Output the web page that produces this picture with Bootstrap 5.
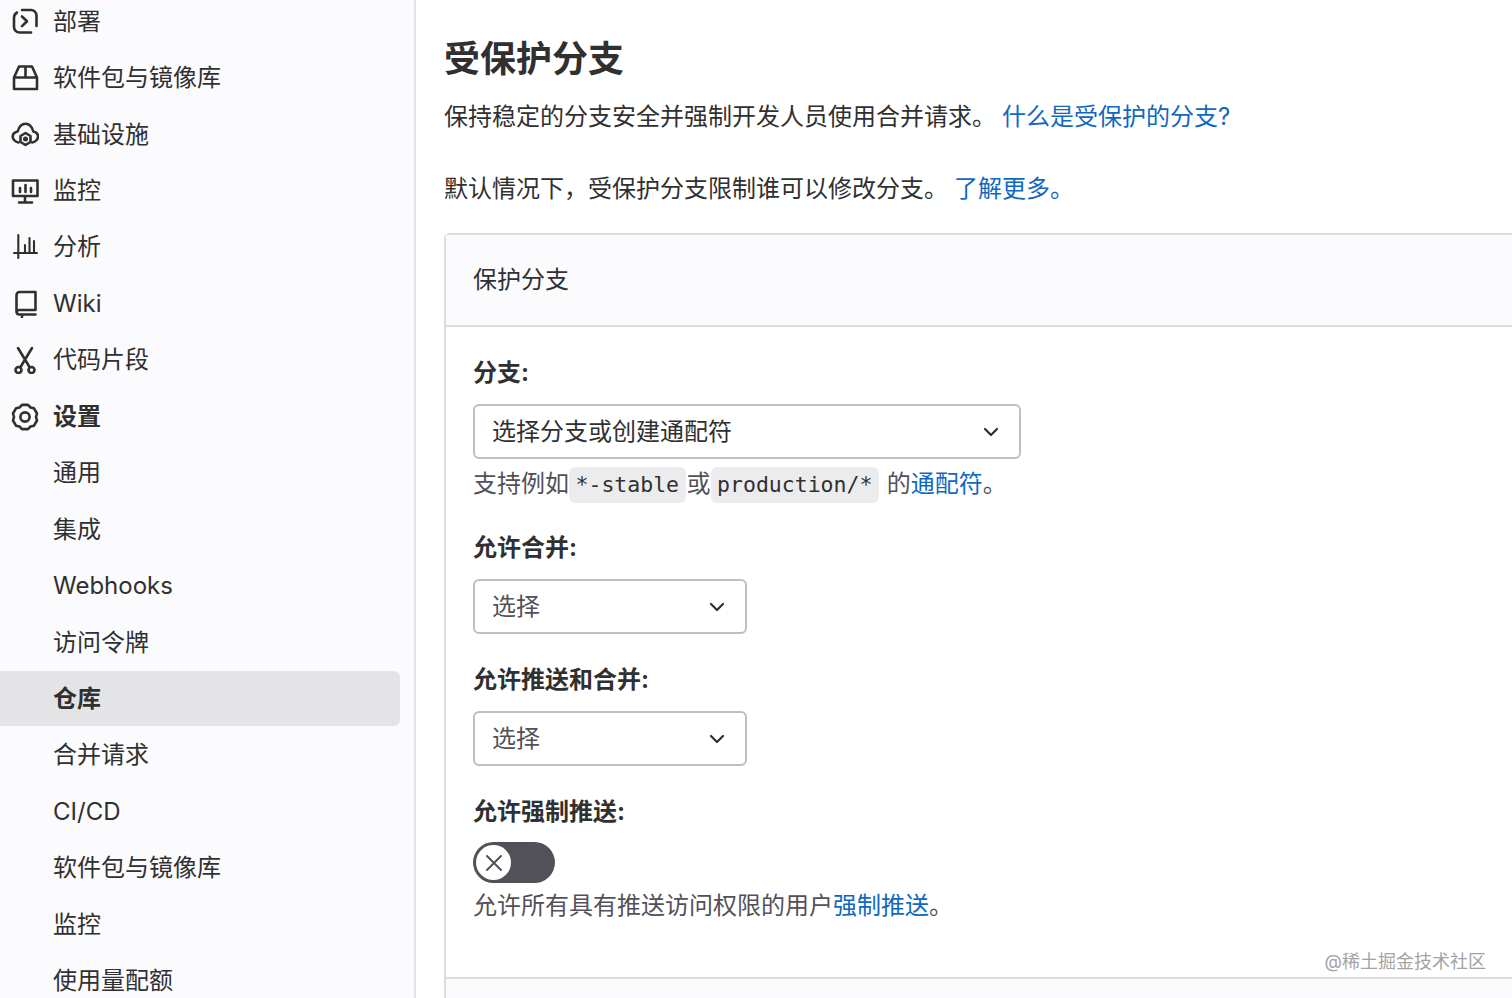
<!DOCTYPE html>
<html lang="zh">
<head>
<meta charset="utf-8">
<title>受保护分支</title>
<link href="https://cdn.jsdelivr.net/npm/bootstrap@5.3.0/dist/css/bootstrap.min.css" rel="stylesheet">
<style>
html,body{height:998px;overflow:hidden;background:#fff;}
body{font-family:Inter,"Noto Sans CJK SC",sans-serif;font-size:24px;color:#303030;line-height:36px;}
.shell{height:998px;overflow:hidden;}
.sidebar{width:416px;flex:none;background:#fbfafd;border-right:2px solid #e4e4e7;padding-right:14px;height:998px;overflow:hidden;}
.side-list{margin-top:-6.5px;}
.side-item{height:56.45px;display:flex;align-items:center;color:#303030;text-decoration:none;padding-left:53px;position:relative;font-size:24px;white-space:nowrap;}
.side-item.with-icon{padding-left:11px;gap:14px;}
.side-item svg{width:28px;height:28px;flex:none;fill:none;stroke:#303030;stroke-width:2.6;stroke-linecap:round;stroke-linejoin:round;}
.side-item svg.thin{stroke-width:2.1;}
.side-item.on{background:#e4e4e7;border-radius:0 6px 6px 0;font-weight:700;height:55px;margin:.7px 0;}
.side-item.bold{font-weight:700;}
.main-pane{padding:0 0 0 28px;min-width:0;flex:1;}
.page-title{font-size:36px;font-weight:700;line-height:48px;margin:35px 0 0;color:#303030;}
.intro{margin:16px 0 0;line-height:36px;white-space:nowrap;}
.intro.second{margin-top:36px;}
.intro a,.hint a{color:#1068bf;text-decoration:none;}
.intro a{margin-left:6px;}
.panel{margin-top:26px;width:1200px;border-left:2px solid #dcdcde;border-top:2px solid #dcdcde;border-radius:6px 0 0 0;}
.panel-top{height:92px;display:flex;align-items:center;padding-left:27px;background:#fbfafd;border-bottom:2px solid #dcdcde;}
.panel-body{padding:28px 27px 0;height:652px;border-bottom:2px solid #dcdcde;}
.panel-foot{height:40px;background:#fbfafd;}
.field-label{font-weight:700;line-height:36px;margin:0;display:block;}
.pick{height:55px;display:flex;align-items:center;justify-content:space-between;border:2px solid #bfbfc3;border-radius:6px;background:#fff;padding:0 19px 0 17px;color:#303030;margin-top:13px;}
.pick svg{width:18px;height:18px;fill:none;stroke:#303030;stroke-width:2.2;stroke-linecap:round;stroke-linejoin:round;}
.pick-lg{width:548px;}
.pick-sm{width:274px;color:#535158;}
.hint{color:#535158;line-height:36px;margin-top:7px;white-space:nowrap;}
.chip{font-family:"DejaVu Sans Mono","Liberation Mono",monospace;font-size:21.5px;color:#303030;background:#ececef;border-radius:6px;padding:5px 6.5px 6px;margin-right:1px;}
.gap-a{margin-top:27px;}
.gap-b{margin-top:28px;}
.switcher{width:82px;height:41px;border-radius:21px;background:#535158;margin-top:12px;display:flex;align-items:center;padding:3px;}
.knob{width:35px;height:35px;border-radius:50%;background:#fff;display:flex;align-items:center;justify-content:center;}
.knob svg{width:20px;height:20px;stroke:#535158;stroke-width:2;fill:none;stroke-linecap:round;}
.switch-hint{margin-top:5px;}
.stamp{position:absolute;right:26px;top:949px;font-size:18px;line-height:26px;color:#a3a3a3;white-space:nowrap;}
</style>
</head>
<body>
<div class="shell d-flex">
  <nav class="sidebar">
    <div class="side-list">
      <a class="side-item with-icon" href="#"><svg viewBox="0 0 28 28"><path d="M11 2h9a5.500 5.500 0 0 1 5.500 5.500V18M20 24.500H8.500A5.500 5.500 0 0 1 3 19V9.500A6 6 0 0 1 6 4.500"/><path d="M11 8.500l5 4.800-5 4.800"/></svg><span>部署</span></a>
      <a class="side-item with-icon" href="#"><svg viewBox="0 0 28 28"><path d="M3 13.500h23V25H3zM3 13.500L8 2.500h13l5 11M14.500 2.500v11"/></svg><span>软件包与镜像库</span></a>
      <a class="side-item with-icon" href="#"><svg viewBox="0 0 28 28"><path d="M7.500 21.500C4 21 1.700 18 1.700 15.500c0-2.500 2-4.300 5-5C8 5.500 11 2.700 14.500 2.700s6.500 2.800 7.800 7.800c3 .7 4.700 2.500 4.700 5 0 2.500-2.300 5.500-5.800 6"/><path d="M14.500 12l5 3v6l-5 3-5-3v-6z"/><circle cx="14.500" cy="18" r="1.200"/></svg><span>基础设施</span></a>
      <a class="side-item with-icon" href="#"><svg viewBox="0 0 28 28"><path d="M2 3.500h24.500V19H2zM14 19v6M8 25.500h13M9 11v4M14.500 8v7M20 11v4"/></svg><span>监控</span></a>
      <a class="side-item with-icon" href="#"><svg class="thin" viewBox="0 0 28 28"><path d="M7.300 2v23M3 20h23M14 12v8M18.500 5v15M23 8v12"/></svg><span>分析</span></a>
      <a class="side-item with-icon" href="#"><svg viewBox="0 0 28 28"><path d="M5.500 21V5a3 3 0 0 1 3-3h16v18H8.500a3 3 0 0 0-3 2 3 3 0 0 0 3 2.500h16M11 24.500V27"/></svg><span>Wiki</span></a>
      <a class="side-item with-icon" href="#"><svg viewBox="0 0 28 28"><path d="M7 2l11.500 19M21 2L9.500 21"/><circle cx="7.500" cy="24" r="3"/><circle cx="20.500" cy="24" r="3"/></svg><span>代码片段</span></a>
      <a class="side-item with-icon bold" href="#"><svg viewBox="0 0 28 28"><path d="M11 1.900L17 1.900 19.500 4.500 23 5.300 26 10.500 25 14 26 17.500 23 22.700 19.500 23.500 17 26.100 11 26.100 8.500 23.500 5 22.700 2 17.500 3 14 2 10.500 5 5.300 8.500 4.500Z"/><circle cx="14" cy="14" r="4.600"/></svg><span>设置</span></a>
      <a class="side-item" href="#">通用</a>
      <a class="side-item" href="#">集成</a>
      <a class="side-item" href="#">Webhooks</a>
      <a class="side-item" href="#">访问令牌</a>
      <a class="side-item on" href="#">仓库</a>
      <a class="side-item" href="#">合并请求</a>
      <a class="side-item" href="#">CI/CD</a>
      <a class="side-item" href="#">软件包与镜像库</a>
      <a class="side-item" href="#">监控</a>
      <a class="side-item" href="#">使用量配额</a>
    </div>
  </nav>
  <main class="main-pane">
    <h1 class="page-title">受保护分支</h1>
    <p class="intro">保持稳定的分支安全并强制开发人员使用合并请求。<a href="#">什么是受保护的分支?</a></p>
    <p class="intro second">默认情况下，受保护分支限制谁可以修改分支。<a href="#">了解更多。</a></p>
    <section class="panel">
      <div class="panel-top">保护分支</div>
      <div class="panel-body">
        <label class="field-label">分支:</label>
        <div class="pick pick-lg"><span>选择分支或创建通配符</span><svg viewBox="0 0 18 18"><path d="M3 6l6 6 6-6"/></svg></div>
        <div class="hint">支持例如<code class="chip">*-stable</code>或<code class="chip">production/*</code> 的<a href="#">通配符</a>。</div>
        <label class="field-label gap-a">允许合并:</label>
        <div class="pick pick-sm"><span>选择</span><svg viewBox="0 0 18 18"><path d="M3 6l6 6 6-6"/></svg></div>
        <label class="field-label gap-b">允许推送和合并:</label>
        <div class="pick pick-sm"><span>选择</span><svg viewBox="0 0 18 18"><path d="M3 6l6 6 6-6"/></svg></div>
        <label class="field-label gap-b">允许强制推送:</label>
        <div class="switcher"><div class="knob"><svg viewBox="0 0 20 20"><path d="M3 3l14 14M17 3L3 17"/></svg></div></div>
        <div class="hint switch-hint">允许所有具有推送访问权限的用户<a href="#">强制推送</a>。</div>
      </div>
      <div class="panel-foot"></div>
    </section>
  </main>
</div>
<div class="stamp">@稀土掘金技术社区</div>
<script src="https://cdn.jsdelivr.net/npm/bootstrap@5.3.0/dist/js/bootstrap.bundle.min.js"></script>
</body>
</html>
